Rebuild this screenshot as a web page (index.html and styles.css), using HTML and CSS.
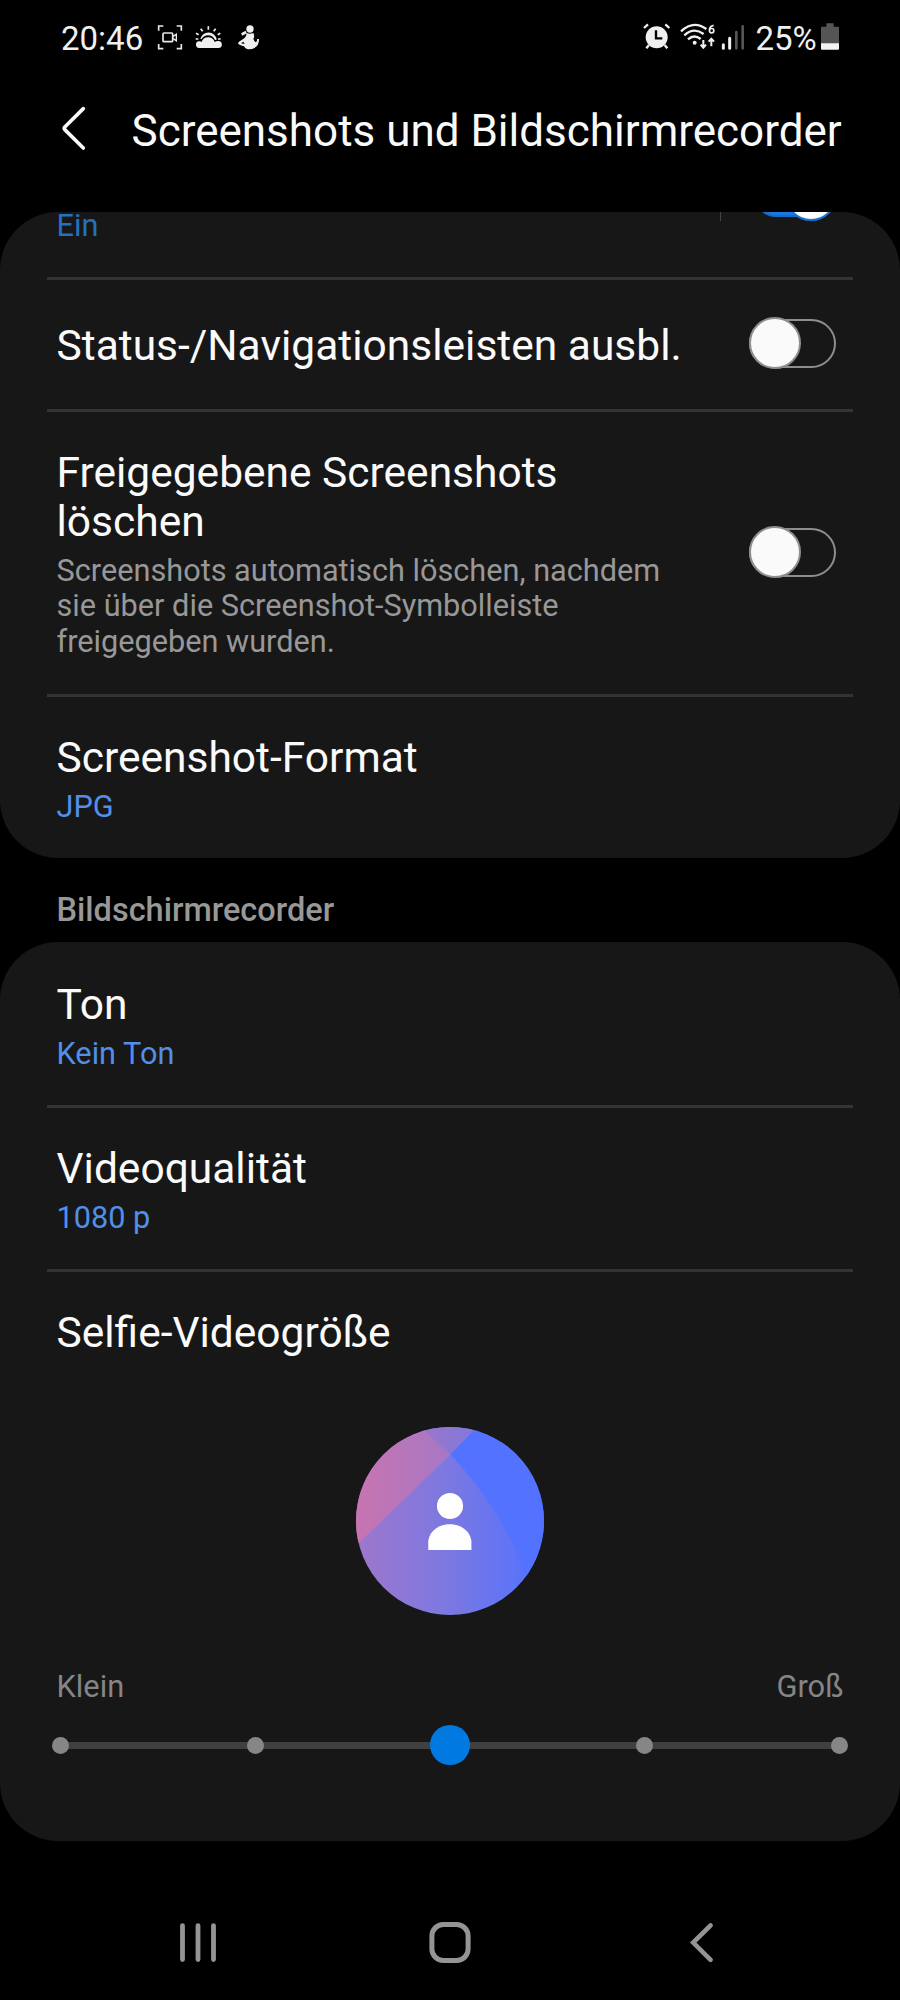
FILE: index.html
```html
<!DOCTYPE html>
<html lang="de">
<head>
<meta charset="utf-8">
<title>Screenshots und Bildschirmrecorder</title>
<link rel="stylesheet" href="styles.css">
</head>
<body>
<div class="screen">
  <div class="status">
    <div class="status-left">
      <span class="clock">20:46</span>
      <svg class="ic rec" viewBox="350 40 78 84" width="26" height="28" fill="none" stroke="#e8e8e8" stroke-width="5">
        <path d="M355 63V49H369M409 49H423V63M423 103V117H409M369 117H355V103"/>
        <rect x="368" y="70" width="29" height="26" rx="3"/><path d="M397 81L408 74V93L397 86" stroke-width="4"/>
      </svg>
      <svg class="ic weather" viewBox="466 40 81 84" width="27" height="28" fill="#f0f0f0">
        <path d="M480 115a10 10 0 0 1-2-20q5-1 8 2q4-14 19-14q16 0 20 14q5-4 11-3a10 10 0 0 1 0 21z"/>
        <path d="M482 88a25 25 0 0 1 49 1q-1 3-5 2q-6-14-21-14q-12 0-19 11z"/>
        <path d="M506 50v10M483 57l6 8M528 57l-6 8M469 71l8 4M542 71l-8 4M468 88h8M535 88h8" stroke="#f0f0f0" stroke-width="5"/>
      </svg>
      <svg class="ic person" viewBox="590 40 69 84" width="23" height="28" fill="#f0f0f0">
        <circle cx="629" cy="58" r="11"/>
        <path d="M616 63L602 71L606 78L619 71ZM619 70q9 5 20 0q5 10 0 18q3 8 8 10q4-4 3-10h6q1 18-14 27q-8 5-22 3q-6-1-9-8q-9-2-16-6q-4-3 1-8l16-10q7-6 7-16z"/>
        <path d="M602 101l7-5 4 7z" fill="#000"/>
      </svg>
    </div>
    <div class="status-right">
      <svg class="ic alarm" viewBox="66 40 84 84" width="28" height="28">
        <path d="M69 55L81 44M145 55L133 44M84 106L76 116M131 106L139 116" stroke="#f0f0f0" stroke-width="7" fill="none"/>
        <circle cx="107" cy="83" r="33" fill="#f0f0f0"/>
        <path d="M105 62V86H124" stroke="#000" stroke-width="7" fill="none"/>
      </svg>
      <svg class="ic wifi" viewBox="178 40 111 84" width="37" height="28" fill="none" stroke="#f0f0f0" stroke-width="7">
        <path d="M181 65Q218 30 257 58M191 77Q219 51 249 73M202 89Q220 72 240 88"/>
        <circle cx="222" cy="99" r="6" fill="#f0f0f0" stroke="none"/>
        <path d="M279 47Q267 49 266 62" stroke-width="5"/><circle cx="273" cy="63" r="6.5" stroke-width="5"/>
        <path d="M248 91V113M240 105L248 114L256 105M272 110V88M264 96L272 87L280 96" stroke-width="6"/>
      </svg>
      <svg class="ic signal" viewBox="302 40 72 84" width="24" height="28">
        <path d="M309 105V116M328 86V116" stroke="#f0f0f0" stroke-width="9" stroke-linecap="round"/>
        <path d="M348 67V116M367 50V116" stroke="#555" stroke-width="8" stroke-linecap="round"/>
      </svg>
      <span class="percent">25%</span>
      <svg class="ic battery" viewBox="602 40 54 84" width="18" height="28">
        <path d="M618 41H640V51H653Q656 51 656 54V102H602V54Q602 51 605 51H618Z" fill="#555"/>
        <path d="M602 101H656V117Q656 120 653 120H605Q602 120 602 117Z" fill="#f4f4f4"/>
      </svg>
    </div>
  </div>

  <header class="header">
    <svg class="back" viewBox="0 0 28 46" width="28" height="46" fill="none" stroke="#fafafa" stroke-width="3.6" stroke-linecap="round" stroke-linejoin="round"><path d="M23.3 3.6L4.8 22Q3.7 23.3 4.8 24.6L23.3 43"/></svg>
    <h1 class="heading">Screenshots und Bildschirmrecorder</h1>
  </header>

  <section class="card first">
    <div class="row clipped">
      <div class="sub ein">Ein</div>
      <div class="clipped-end"><span class="vline"></span><span class="toggle on"></span></div>
    </div>
    <div class="row single"><div class="title">Status-/Navigationsleisten ausbl.</div><span class="toggle"></span></div>
    <div class="row shared">
      <div class="text"><div class="title">Freigegebene Screenshots löschen</div>
      <div class="sub muted">Screenshots automatisch löschen, nachdem sie über die Screenshot-Symbolleiste freigegeben wurden.</div></div>
      <span class="toggle"></span>
    </div>
    <div class="row format"><div class="text"><div class="title">Screenshot-Format</div><div class="sub">JPG</div></div></div>
  </section>

  <h2 class="section-label">Bildschirmrecorder</h2>

  <section class="card second">
    <div class="row sound"><div class="text"><div class="title">Ton</div><div class="sub">Kein Ton</div></div></div>
    <div class="row quality"><div class="text"><div class="title">Videoqualität</div><div class="sub">1080 p</div></div></div>
    <div class="selfie">
      <div class="title">Selfie-Videogröße</div>
      <svg class="avatar" viewBox="48 52 562 562" width="188" height="188">
        <defs>
          <clipPath id="disc"><circle cx="329" cy="333" r="281"/></clipPath>
          <linearGradient id="base" gradientUnits="userSpaceOnUse" x1="48" y1="0" x2="610" y2="0"><stop offset="0" stop-color="#9e77cc"/><stop offset=".5" stop-color="#7b78e2"/><stop offset=".9" stop-color="#5a73fa"/><stop offset="1" stop-color="#5272ff"/></linearGradient>
          <linearGradient id="pink" gradientUnits="userSpaceOnUse" x1="48" y1="0" x2="330" y2="0"><stop offset="0" stop-color="#c874b0"/><stop offset="1" stop-color="#a678c5"/></linearGradient>
          <linearGradient id="top" gradientUnits="userSpaceOnUse" x1="250" y1="0" x2="400" y2="0"><stop offset="0" stop-color="#9977cc"/><stop offset="1" stop-color="#8377db"/></linearGradient>
        </defs>
        <g clip-path="url(#disc)">
          <path fill="url(#base)" d="M48 52H610V614H48Z"/>
          <path fill="url(#pink)" d="M40 415L330 134L240 48H40Z"/>
          <path fill="url(#top)" d="M240 52L330 134L415 48Z"/>
          <path fill="#5272ff" d="M330 134L415 48H612V614H590Q570 540 535 440Q460 270 330 134Z"/>
        </g>
        <circle cx="329" cy="288" r="39" fill="#fff"/>
        <path d="M264 420V392C274 326 383 326 393 392V420Z" fill="#fff"/>
      </svg>
      <div class="range-labels"><span>Klein</span><span>Groß</span></div>
      <div class="slider"><i class="tick"></i><i class="tick"></i><i class="thumb"></i><i class="tick"></i><i class="tick"></i></div>
    </div>
  </section>

  <nav class="nav">
    <svg viewBox="0 0 38 50" width="38" height="50" stroke="#949494" stroke-width="4.8" stroke-linecap="round"><path d="M3.5 7.6V41.6M19 7.6V41.6M34.5 7.6V41.6"/></svg>
    <svg viewBox="0 0 44 50" width="44" height="50" fill="none" stroke="#949494" stroke-width="5"><rect x="3.9" y="6.5" width="36.2" height="36" rx="11.5"/></svg>
    <svg viewBox="0 0 30 50" width="30" height="50" fill="none" stroke="#949494" stroke-width="4.6" stroke-linecap="round"><path d="M24.6 7.4L7.2 24.6L24.6 41.8"/></svg>
  </nav>
</div>
</body>
</html>
```
FILE: styles.css
```css
* { box-sizing: border-box; }
body { margin: 0; background: #000; font-family: Roboto, "Liberation Sans", sans-serif; color: #fafafa; }
.screen { width: 900px; height: 2000px; overflow: hidden; background: #000; display: flex; flex-direction: column; }

.status { height: 80px; flex: none; display: flex; justify-content: space-between; padding: 19px 61px 0 61px; }
.status-left, .status-right { display: flex; align-items: flex-start; }
.ic { margin-top: 4px; flex: none; }
.clock, .percent { font-size: 33px; line-height: 39px; color: #f0f0f0; white-space: nowrap; }
.clock { width: 95.5px; }
.weather { margin-left: 12.5px; }
.person { margin-left: 14.5px; }
.wifi { margin-left: 9px; }
.signal { margin-left: 4px; }
.percent { width: 65.5px; margin-left: 10.5px; }

.header { height: 132px; flex: none; display: flex; align-items: flex-start; padding: 25px 0 0 60px; }
.heading { margin: 0 0 0 43.5px; font-size: 44px; line-height: 52px; font-weight: 400; white-space: nowrap; }

.card { flex: none; background: #171717; border-radius: 58px; overflow: hidden; padding: 0 47px; }
.first { height: 646px; }
.second { height: 899px; }
.row { display: flex; align-items: center; justify-content: space-between; padding: 0 17px 0 9.5px; border-bottom: 3px solid #333; }
.card .row:last-child { border-bottom: 0; }
.title { font-size: 42.5px; line-height: 49px; white-space: nowrap; }
.sub { font-size: 30.7px; line-height: 35.8px; margin-top: 6.5px; color: #518fe8; }
.sub.muted { color: #989898; }
.clipped { height: 68px; align-items: flex-start; }
.clipped .ein { margin-top: 0; line-height: 27px; color: #2272bf; }
.clipped-end { display: flex; align-items: flex-start; margin-top: -43px; }
.vline { width: 1.5px; height: 52px; background: #444; margin-right: 28px; }
.single { height: 132px; padding-bottom: 1px; }
.single .title { margin-top: 3px; }
.shared { height: 285px; align-items: flex-start; padding-top: 36px; }
.shared .text { width: 612px; }
.shared .title { width: 560px; white-space: normal; }
.shared .toggle { margin-top: 78px; }
.format, .quality { align-items: flex-start; padding-top: 36px; }

.toggle { width: 87px; height: 52px; flex: none; display: flex; align-items: center; position: relative; }
.toggle::before, .toggle::after { content: ""; box-sizing: border-box; }
.toggle::before { width: 87px; height: 49px; border: 2px solid #8e8e8e; border-radius: 25px; }
.toggle::after { position: absolute; left: 0; top: 0; width: 52px; height: 52px; border-radius: 50%; background: #fafafa; border: 2.5px solid #8e8e8e; }
.single .toggle { margin-top: -2px; }
.toggle.on::before { width: 78px; height: 44px; margin-left: 5px; background: #1f78e0; border-color: #126cc8; }
.toggle.on::after { left: 36px; border-color: #1773d8; background: #fff; }

.section-label { flex: none; height: 84px; margin: 0; padding: 33px 0 0 56.5px; font-size: 32.5px; line-height: 38px; font-weight: 500; color: #989898; }

.sound { height: 166px; align-items: flex-start; padding-top: 38px; }
.quality { height: 164px; }
.selfie { display: flex; flex-direction: column; padding: 36px 0 0; }
.selfie .title { padding-left: 9.5px; }
.avatar { align-self: center; margin-top: 70px; flex: none; }
.range-labels { display: flex; justify-content: space-between; margin-top: 54px; padding: 0 9.5px; font-size: 30.8px; line-height: 36px; color: #858585; }
.slider { height: 40px; margin: 20px 5px 0; display: flex; align-items: center; justify-content: space-between; background: linear-gradient(#404040, #404040) center / 778px 7px no-repeat; }
.tick { width: 17px; height: 17px; border-radius: 50%; background: #868686; }
.thumb { width: 40px; height: 40px; margin: 0 -11.5px; border-radius: 50%; background: #007ae0; }

.nav { flex: 1; display: grid; grid-template-columns: 246px 261px 30px; padding: 77px 0 0 179px; }
.nav svg:nth-child(2) { margin-left: 3px; }
```
